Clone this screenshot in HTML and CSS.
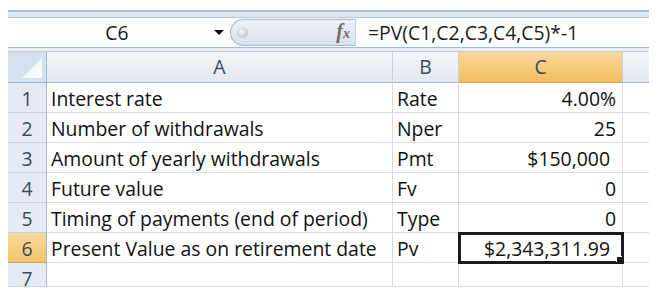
FILE: index.html
```html
<!DOCTYPE html>
<html lang="en">
<head>
  <meta charset="UTF-8">
  <meta name="viewport" content="width=device-width, initial-scale=1.0">
  <title>Present Value</title>
  <link rel="stylesheet" href="styles.css">
</head>
<body>
  <div class="sheet">
    <div class="ribbon-edge"></div>

    <div class="fxbar">
      <div class="namebox">
        <span class="ref">C6</span>
        <span class="arrow"></span>
      </div>
      <div class="fxpill">
        <span class="knob"></span>
        <span class="fx">f<small>x</small></span>
      </div>
      <div class="formula">=PV(C1,C2,C3,C4,C5)*-1</div>
    </div>

    <div class="gap"></div>

    <div class="grid">
      <div class="hd corner"></div>
      <div class="hd col">A</div>
      <div class="hd col">B</div>
      <div class="hd col sel">C</div>
      <div class="hd col last"></div>

      <div class="hd row">1</div>
      <div class="cell">Interest rate</div>
      <div class="cell">Rate</div>
      <div class="cell num">4.00%</div>
      <div class="cell last"></div>

      <div class="hd row">2</div>
      <div class="cell">Number of withdrawals</div>
      <div class="cell">Nper</div>
      <div class="cell num">25</div>
      <div class="cell last"></div>

      <div class="hd row">3</div>
      <div class="cell">Amount of yearly withdrawals</div>
      <div class="cell">Pmt</div>
      <div class="cell num money">$150,000</div>
      <div class="cell last"></div>

      <div class="hd row">4</div>
      <div class="cell">Future value</div>
      <div class="cell">Fv</div>
      <div class="cell num">0</div>
      <div class="cell last"></div>

      <div class="hd row">5</div>
      <div class="cell">Timing of payments (end of period)</div>
      <div class="cell">Type</div>
      <div class="cell num">0</div>
      <div class="cell last"></div>

      <div class="hd row sel">6</div>
      <div class="cell">Present Value as on retirement date</div>
      <div class="cell">Pv</div>
      <div class="cell num money active">$2,343,311.99<span class="handle"></span></div>
      <div class="cell last"></div>

      <div class="hd row">7</div>
      <div class="cell"></div>
      <div class="cell"></div>
      <div class="cell"></div>
      <div class="cell last"></div>
    </div>
  </div>
</body>
</html>
```

FILE: styles.css
```css
body {
  margin: 0;
  background: #fff;
  font-family: "Open Sans", "Liberation Sans", sans-serif;
  font-size: 19.4px;
  color: #111;
}

.sheet {
  width: 641px;
  margin: 10px 0 0 8px;
}

.ribbon-edge {
  height: 5px;
  border-top: 2px solid #a9c0dc;
  border-bottom: 1px solid #b3c3d6;
  background: #dde7f2;
}

.fxbar {
  display: flex;
  align-items: center;
  height: 29px;
  background: #fff;
  border-bottom: 1px solid #a9b9cc;
}

.namebox {
  display: flex;
  align-items: center;
  width: 222px;
  height: 100%;
}

.namebox .ref {
  flex: 1;
  text-align: center;
  padding-left: 12px;
  color: #1c1c1c;
}

.namebox .arrow {
  width: 0;
  height: 0;
  margin-right: 6px;
  border-left: 5px solid transparent;
  border-right: 5px solid transparent;
  border-top: 5px solid #111;
}

.fxpill {
  display: flex;
  align-items: center;
  justify-content: space-between;
  width: 126px;
  height: 27px;
  box-sizing: border-box;
  border: 1px solid #a6b6ca;
  border-right-color: #c6d1de;
  border-radius: 14px 0 0 14px;
  background: linear-gradient(#eef3f9, #d7e1ee);
  padding: 0 5px 0 6px;
}

.fxpill .knob {
  width: 11px;
  height: 11px;
  border-radius: 50%;
  background: radial-gradient(circle at 40% 40%, #f6f6f6, #b2b8c1);
}

.fxpill .fx {
  font-family: "Liberation Serif", serif;
  font-style: italic;
  font-weight: bold;
  font-size: 20px;
  line-height: 20px;
  color: #6e6e6e;
}

.fxpill .fx small {
  font-size: 14px;
}

.formula {
  padding-left: 12px;
  color: #1c1c1c;
}

.gap {
  height: 3px;
  background: #e9eef5;
}

.grid {
  display: grid;
  grid-template-columns: 39px 346px 66px 164px 26px;
  grid-template-rows: 31px repeat(6, 30px) 24px;
  border-top: 1px solid #c4d0de;
}

.cell,
.hd {
  box-sizing: border-box;
  overflow: hidden;
  white-space: nowrap;
  line-height: 30px;
}

.cell {
  padding: 1px 4px 0;
  border-right: 1px solid #d5dce6;
  border-bottom: 1px solid #d5dce6;
}

.cell.num {
  text-align: right;
  padding-right: 6px;
}

.cell.money {
  padding-right: 12px;
}

.cell.last {
  border-right: none;
}

.cell.active {
  position: relative;
  outline: 3px solid #1b1b1b;
  outline-offset: -2px;
}

.handle {
  position: absolute;
  right: -2px;
  bottom: -2px;
  width: 6px;
  height: 6px;
  background: #1b1b1b;
  border: 1px solid #fff;
}

.hd {
  color: #3a4b60;
  text-align: center;
  background: linear-gradient(#f3f6fa, #e2e9f2);
}

.hd.col {
  border-right: 1px solid #c6d2df;
  border-bottom: 1px solid #9eb6ce;
}

.hd.col.last {
  border-right: none;
}

.hd.row {
  background: #e4ebf4;
  border-right: 1px solid #9eb6ce;
  border-bottom: 1px solid #c6d2df;
  padding-top: 1px;
}

.hd.sel {
  background: linear-gradient(#f9d99c, #f2bd5f);
  border-bottom-color: #d7a24a;
}

.hd.row.sel {
  background: linear-gradient(#f9d99c, #f4c46e);
}

.hd.corner {
  position: relative;
  background: #d6e1ef;
  border-right: 1px solid #9eb6ce;
  border-bottom: 1px solid #9eb6ce;
}

.hd.corner::after {
  content: "";
  position: absolute;
  right: 4px;
  bottom: 4px;
  width: 20px;
  height: 20px;
  background: linear-gradient(135deg, #eef3f9, #fbfcfe);
  clip-path: polygon(100% 0, 100% 100%, 0 100%);
}
```
